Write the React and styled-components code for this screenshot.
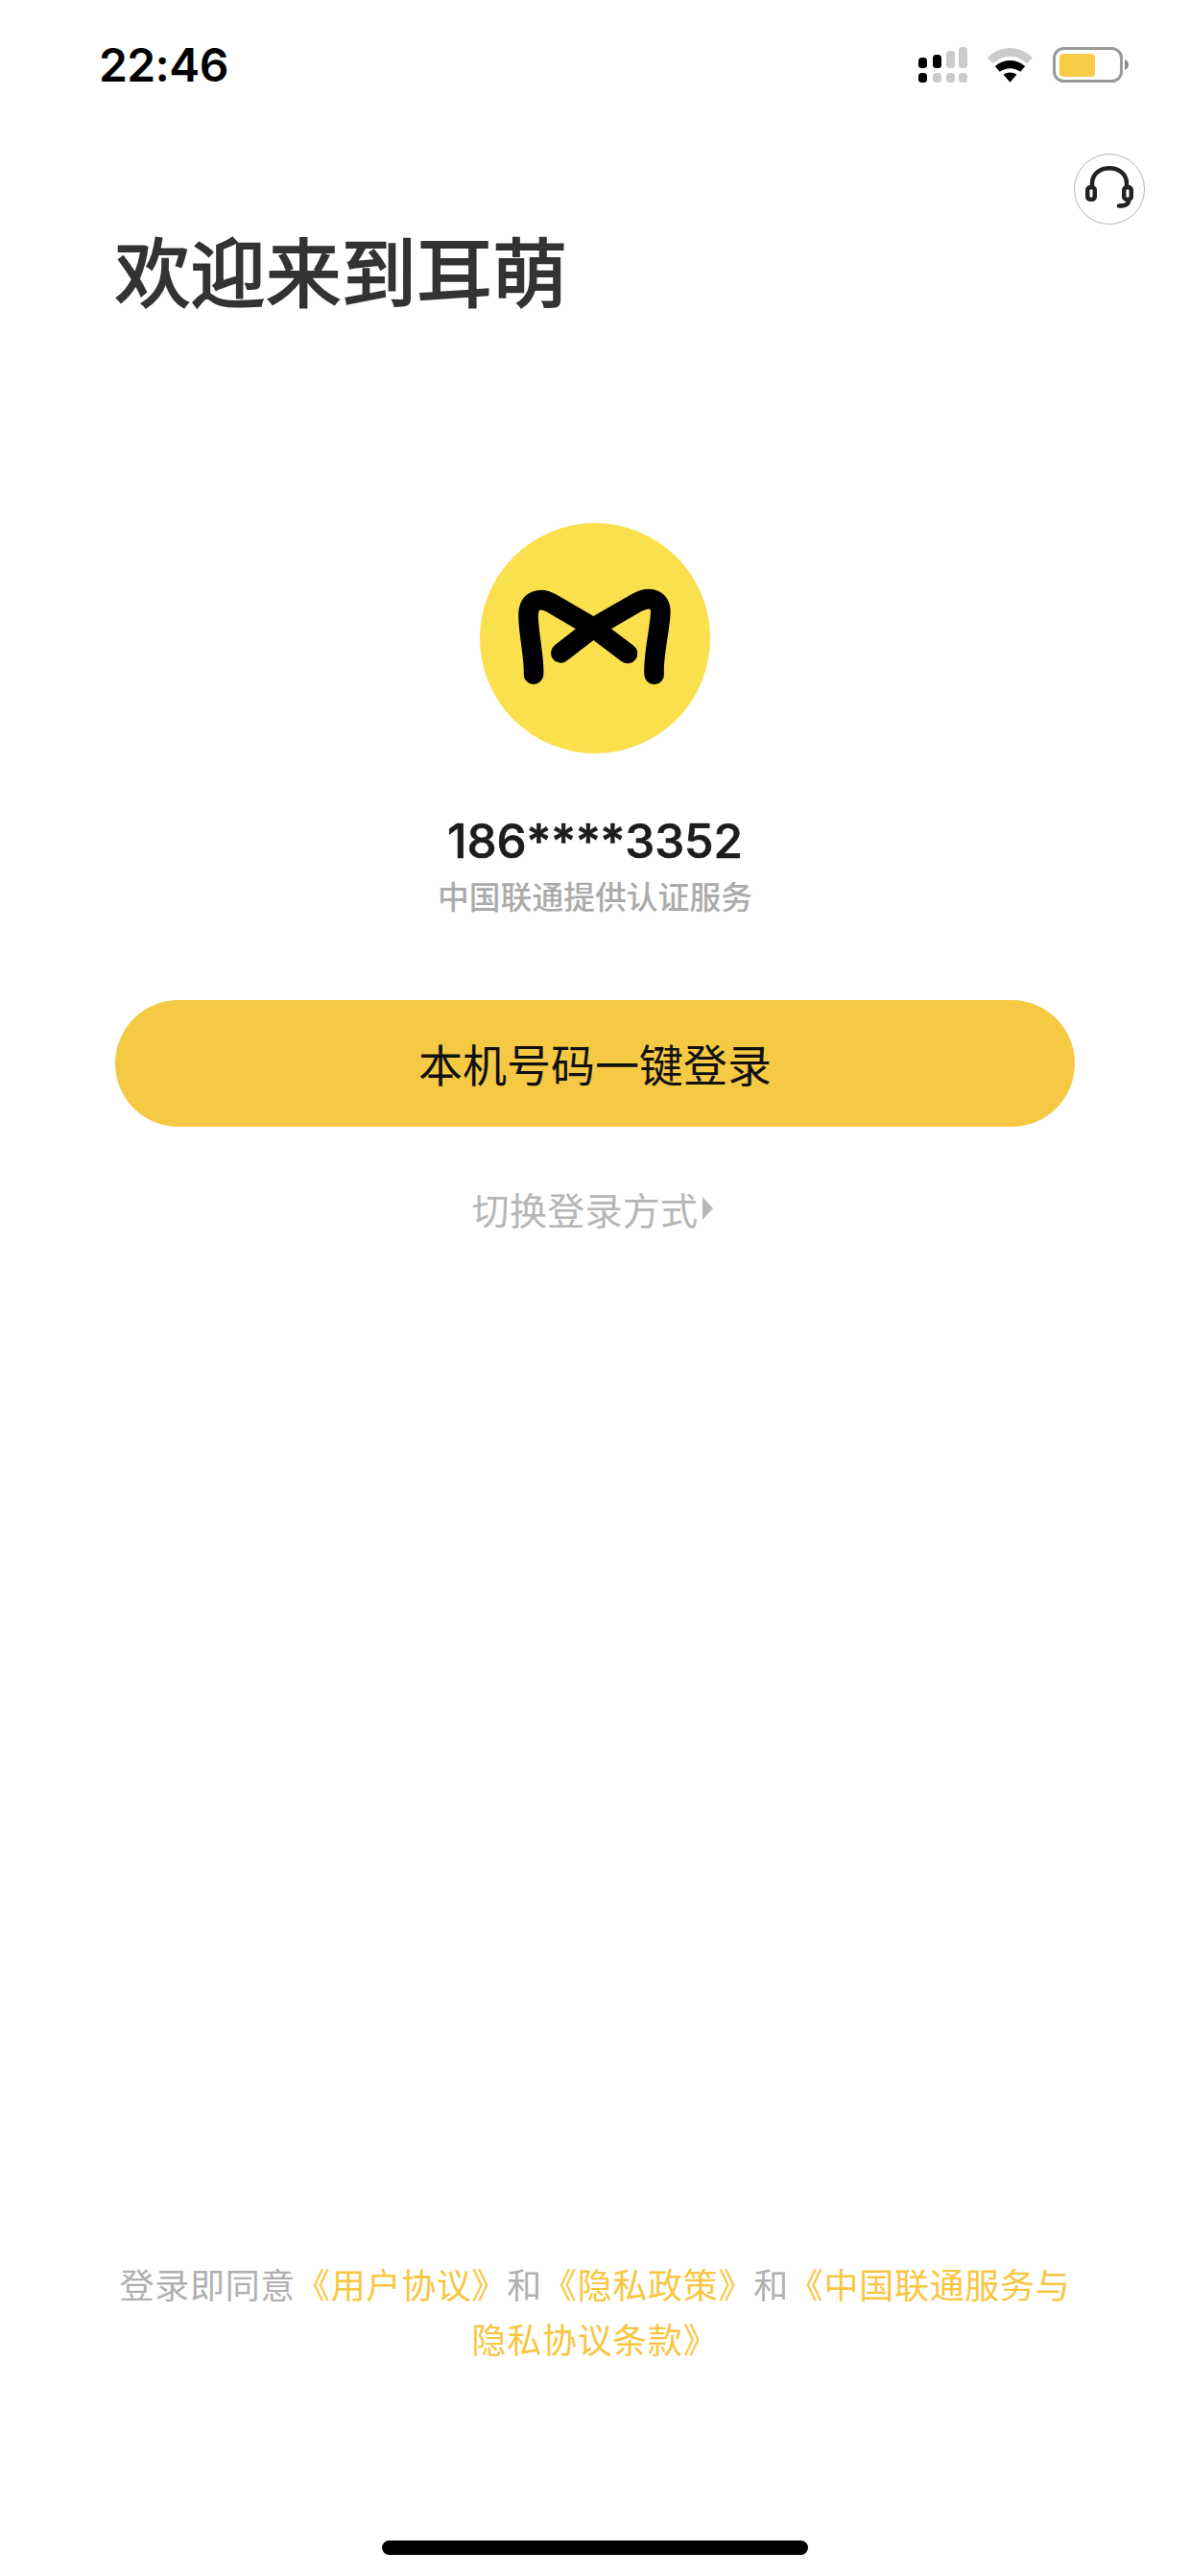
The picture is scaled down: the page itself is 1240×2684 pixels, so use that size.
import React from 'react';
import styled, { createGlobalStyle } from 'styled-components';

const GlobalStyle = createGlobalStyle`
  html, body {
    margin: 0;
    padding: 0;
    background: #fff;
  }
`;

const CJK = `"Noto Sans CJK SC", "Noto Sans", sans-serif`;

const Screen = styled.div`
  width: 1240px;
  height: 2684px;
  display: flex;
  flex-direction: column;
  background: #fff;
  font-family: ${CJK};
  overflow: hidden;
`;

const StatusBar = styled.div`
  height: 136px;
  flex: none;
  display: flex;
  justify-content: space-between;
  align-items: flex-start;
  padding: 38px 64px 0 103px;
  box-sizing: border-box;
`;

const Time = styled.div`
  font-family: Inter, sans-serif;
  font-weight: 600;
  font-size: 48px;
  line-height: 60px;
  letter-spacing: -0.6px;
  color: #000;
`;

const StatusIcons = styled.div`
  display: flex;
  align-items: flex-start;
  margin-top: 11px;
  gap: 21px;
`;

const SupportRow = styled.div`
  height: 98px;
  display: flex;
  justify-content: flex-end;
  padding: 24px 47px 0 0;
  box-sizing: border-box;
`;

const SupportButton = styled.div`
  width: 74px;
  height: 74px;
  box-sizing: border-box;
  border: 1px solid #b5b5b5;
  border-radius: 50%;
  display: flex;
  align-items: center;
  justify-content: center;
`;

const Title = styled.h1`
  margin: -93px 0 0 120px;
  padding-top: 94px;
  height: 310px;
  font-size: 78px;
  line-height: 90px;
  font-weight: 400;
  color: #333;
  letter-spacing: 0.6px;
  -webkit-text-stroke: 2.2px #333;
`;

const Account = styled.section`
  display: flex;
  flex-direction: column;
  align-items: center;
`;

const LogoDisc = styled.div`
  width: 240px;
  height: 240px;
  border-radius: 50%;
  background: #fae04c;
  display: flex;
  align-items: center;
  justify-content: center;
`;

const Phone = styled.div`
  margin-top: 59px;
  font-family: Inter, sans-serif;
  font-weight: 500;
  font-size: 49.5px;
  line-height: 64px;
  letter-spacing: -0.1px;
  -webkit-text-stroke: 0.7px #1c1c1c;
  color: #1c1c1c;
`;

const Carrier = styled.div`
  margin-top: 3px;
  font-size: 32.8px;
  line-height: 44px;
  font-weight: 500;
  color: #ababab;
`;

const LoginButton = styled.button`
  margin: 87px 120px 0;
  height: 132px;
  flex: none;
  border: 0;
  border-radius: 66px;
  background: #f6c945;
  color: #111;
  font-family: ${CJK};
  font-size: 46px;
  letter-spacing: 0;
  font-weight: 400;
  padding: 0 0 3px;
`;

const SwitchLink = styled.div`
  margin-top: 57px;
  padding-right: 5px;
  display: flex;
  justify-content: center;
  align-items: center;
  gap: 5px;
  font-size: 39px;
  line-height: 56px;
  letter-spacing: 0.3px;
  font-weight: 400;
  color: #b6b6b6;
`;

const Caret = styled.span`
  width: 0;
  height: 0;
  border-left: 11px solid #b8b8b8;
  border-top: 12px solid transparent;
  border-bottom: 12px solid transparent;
`;

const Agreement = styled.p`
  margin: auto 120px 93px;
  font-size: 36px;
  line-height: 57px;
  letter-spacing: 0.7px;
  text-align: center;
  color: #b0b0b0;
  font-weight: 400;
`;

const Policy = styled.span`
  color: #f8c63f;
`;

const HomeBarRow = styled.div`
  flex: none;
  height: 126px;
  box-sizing: border-box;
  padding: 89px 0 0 0;
  display: flex;
  justify-content: center;
`;

const HomeBar = styled.div`
  width: 444px;
  height: 15px;
  border-radius: 8px;
  background: #000;
`;

const signalBars = [
  { x: 0, y: 11, h: 11, on: true, dot: true },
  { x: 15, y: 8, h: 14, on: true, dot: false },
  { x: 29, y: 4, h: 18, on: false, dot: false },
  { x: 42, y: 0, h: 22, on: false, dot: false },
];

const Signal = () => (
  <svg width="51" height="38" viewBox="0 0 51 38">
    {signalBars.map((b) => (
      <g key={b.x}>
        <rect x={b.x} y={b.y} width="9" height={b.h} rx="3.5" fill={b.on ? '#000' : '#cbcbcb'} />
        <rect x={b.x} y="27" width="9" height="10" rx="3.5" fill={b.dot ? '#000' : '#cbcbcb'} />
      </g>
    ))}
  </svg>
);

const Wifi = () => (
  <svg width="47" height="38" viewBox="0 0 48 38">
    <path d="M0 11 C14 -3 34 -3 48 11 L42 17 C31 7 17 7 6 17 Z" fill="#cbcbcb" />
    <path d="M8 20 C18 12 30 12 40 20 L35 26 C28 21 20 21 13 26 Z" fill="#000" />
    <path d="M17 29 C21 26 27 26 31 29 L24 37 Z" fill="#000" />
  </svg>
);

const Battery = () => (
  <svg width="79" height="38" viewBox="0 0 79 38">
    <rect x="1.5" y="1.5" width="70" height="34" rx="10" fill="none" stroke="#999" strokeWidth="3" />
    <rect x="7" y="7" width="37" height="24" rx="4" fill="#f6cc45" />
    <path d="M75 13 C78 14 79 16 79 18.5 C79 21 78 23 75 24 Z" fill="#888" />
  </svg>
);

const Headset = () => (
  <svg width="54" height="48" viewBox="0 0 54 48" fill="none" stroke="#222" strokeWidth="4.5" strokeLinecap="round" strokeLinejoin="round">
    <path d="M9 20 V18 C9 -3 45 -3 45 18 V20" />
    <rect x="4.25" y="22.25" width="7.5" height="12.5" rx="2.5" />
    <rect x="42.25" y="22.25" width="7.5" height="12.5" rx="2.5" />
    <path d="M47 36 C47 40 43 41.5 37 41.5" />
  </svg>
);

const Logo = () => (
  <svg width="240" height="240" viewBox="60 45 720 720" fill="none" stroke="#000" strokeWidth="62" strokeLinecap="round" strokeLinejoin="round">
    <path d="M228 518 C232 470 208 370 212 326 C215 285 250 275 285 296 L415 372 L522 453" />
    <path d="M605 518 C600 470 624 370 625 324 C626 282 590 272 550 294 L415 372 L313 451" />
  </svg>
);

const App = () => (
  <Screen>
    <GlobalStyle />
    <StatusBar>
      <Time>22:46</Time>
      <StatusIcons>
        <Signal />
        <Wifi />
        <Battery />
      </StatusIcons>
    </StatusBar>
    <SupportRow>
      <SupportButton>
        <Headset />
      </SupportButton>
    </SupportRow>
    <Title>欢迎来到耳萌</Title>
    <Account>
      <LogoDisc>
        <Logo />
      </LogoDisc>
      <Phone>186****3352</Phone>
      <Carrier>中国联通提供认证服务</Carrier>
    </Account>
    <LoginButton>本机号码一键登录</LoginButton>
    <SwitchLink>
      切换登录方式
      <Caret />
    </SwitchLink>
    <Agreement>
      登录即同意<Policy>《用户协议》</Policy>和<Policy>《隐私政策》</Policy>和<Policy>《中国联通服务与</Policy>
      <br />
      <Policy>隐私协议条款》</Policy>
    </Agreement>
    <HomeBarRow>
      <HomeBar />
    </HomeBarRow>
  </Screen>
);

export default App;
